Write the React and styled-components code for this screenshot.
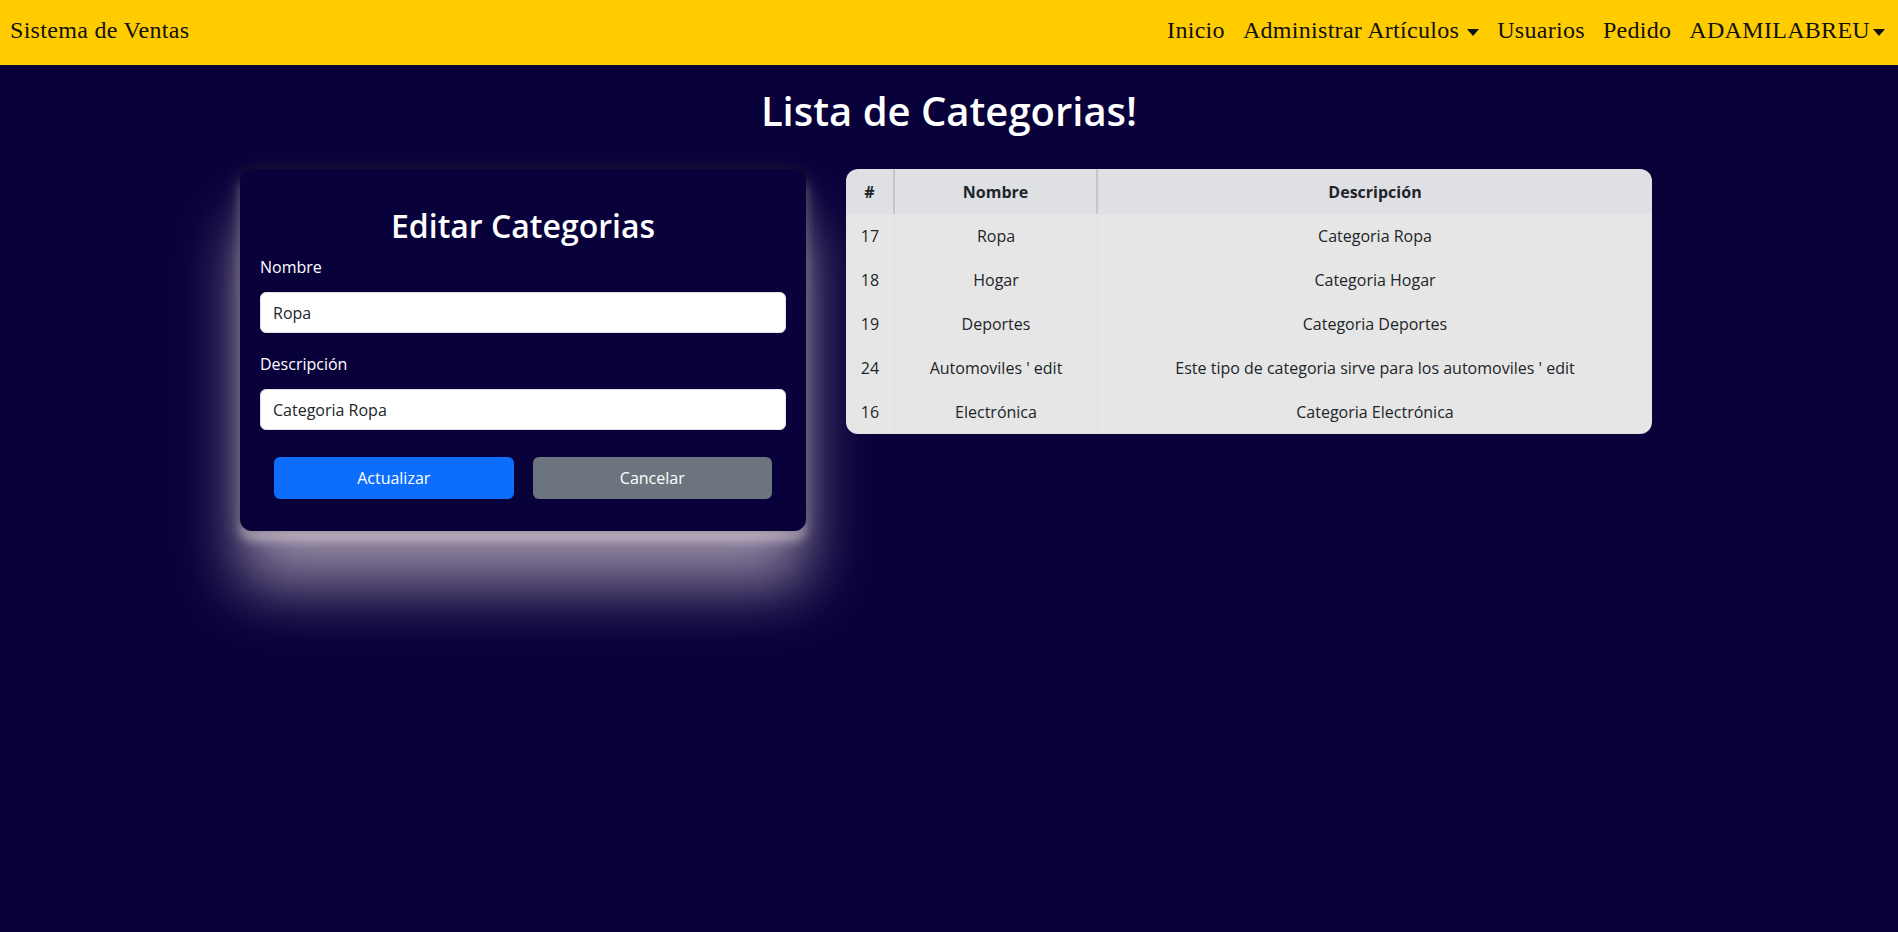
import styled, { createGlobalStyle } from "styled-components";

const GlobalStyle = createGlobalStyle`
  body {
    margin: 0;
    background: #08013a;
    font-family: "Open Sans", "Noto Sans", sans-serif;
    color: #fff;
  }
  #root { min-height: 100vh; }
  * { box-sizing: border-box; }
`

const Navbar = styled.nav`
  display: flex;
  justify-content: space-between;
  align-items: center;
  height: 65px;
  padding: 0 13px 4px 10px;
  background: #ffcc00;
  font-family: "Liberation Serif", serif;
  font-size: 24px;
  letter-spacing: 0.3px;
  color: #111;
`
const Brand = styled.a`
  color: #111;
`
const NavList = styled.ul`
  display: flex;
  gap: 18px;
  margin: 0;
  padding: 0;
  list-style: none;
`
const NavItem = styled.li`
  display: flex;
  align-items: center;
  &::after {
    content: ${(props) => props.$dropdown ? "''" : 'none'};
    margin-left: ${(props) => props.$tight ? '3px' : '8px'};
    margin-top: 3px;
    border-top: 7px solid #111;
    border-left: 6px solid transparent;
    border-right: 6px solid transparent;
  }
`
const Main = styled.main`
  display: flex;
  flex-direction: column;
  align-items: center;
  min-height: calc(100vh - 65px);
`
const PageTitle = styled.h1`
  margin: 22px 0 34px;
  font-size: 40px;
  line-height: 48px;
  font-weight: 600;
`
const Content = styled.div`
  display: flex;
  align-items: flex-start;
  gap: 40px;
  margin-right: 6px;
`
const Card = styled.section`
  width: 566px;
  padding: 38px 20px 32px;
  border-radius: 12px;
  background: #08013a;
  box-shadow:
    0 -2px 8px rgba(0, 0, 0, 0.45),
    0 6px 22px rgba(255, 255, 255, 0.22),
    0 10px 10px rgba(225, 210, 215, 0.45),
    0 55px 62px 0 rgba(236, 222, 228, 0.6);
`
const CardTitle = styled.h2`
  margin: 0 0 10px;
  text-align: center;
  font-size: 32px;
  line-height: 38px;
  font-weight: 600;
`
const Label = styled.label`
  display: block;
  margin-bottom: 13px;
  font-size: 16px;
  line-height: 24px;
`
const Input = styled.input`
  display: block;
  width: 100%;
  height: 41px;
  margin-bottom: ${(props) => props.$last ? '27px' : '19px'};
  padding: 6px 12px;
  border: 1px solid #dee2e6;
  border-radius: 6px;
  background: #fff;
  font-family: inherit;
  font-size: 16px;
  color: #212529;
`
const ButtonRow = styled.div`
  display: grid;
  grid-template-columns: 1fr 1fr;
  gap: 19px;
  padding: 0 14px;
`
const Button = styled.button`
  height: 42px;
  border: none;
  border-radius: 6px;
  background: ${(props) => props.$secondary ? '#6c757d' : '#0d6efd'};
  color: #fff;
  font-family: inherit;
  font-size: 16px;
`
const Table = styled.table`
  width: 806px;
  border-collapse: separate;
  border-spacing: 0;
  border-radius: 12px;
  overflow: hidden;
  color: #212529;
  font-size: 16px;
  text-align: center;
`
const Th = styled.th`
  height: 45px;
  width: ${(props) => props.$w};
  background: #dfe0e3;
  font-weight: 700;
  border-right: 2px solid #c6c6ca;
  &:last-child { border-right: none; }
`
const Td = styled.td`
  height: 44px;
  background: #e6e6e6;
  border-right: 1px solid #dde1e8;
  &:last-child { border-right: none; }
`

const categorias = [
  { id: 17, nombre: 'Ropa', descripcion: 'Categoria Ropa' },
  { id: 18, nombre: 'Hogar', descripcion: 'Categoria Hogar' },
  { id: 19, nombre: 'Deportes', descripcion: 'Categoria Deportes' },
  { id: 24, nombre: "Automoviles ' edit", descripcion: "Este tipo de categoria sirve para los automoviles ' edit" },
  { id: 16, nombre: 'Electrónica', descripcion: 'Categoria Electrónica' },
]

export default function App() {
  return (
    <>
      <GlobalStyle />
      <Navbar>
        <Brand>Sistema de Ventas</Brand>
        <NavList>
          <NavItem>Inicio</NavItem>
          <NavItem $dropdown>Administrar Artículos</NavItem>
          <NavItem>Usuarios</NavItem>
          <NavItem>Pedido</NavItem>
          <NavItem $dropdown $tight>ADAMILABREU</NavItem>
        </NavList>
      </Navbar>
      <Main>
        <PageTitle>Lista de Categorias!</PageTitle>
        <Content>
          <Card>
            <CardTitle>Editar Categorias</CardTitle>
            <Label>Nombre</Label>
            <Input defaultValue="Ropa" />
            <Label>Descripción</Label>
            <Input $last defaultValue="Categoria Ropa" />
            <ButtonRow>
              <Button>Actualizar</Button>
              <Button $secondary>Cancelar</Button>
            </ButtonRow>
          </Card>
          <Table>
            <thead>
              <tr>
                <Th $w="49px">#</Th>
                <Th $w="203px">Nombre</Th>
                <Th>Descripción</Th>
              </tr>
            </thead>
            <tbody>
              {categorias.map((c) => (
                <tr key={c.id}>
                  <Td>{c.id}</Td>
                  <Td>{c.nombre}</Td>
                  <Td>{c.descripcion}</Td>
                </tr>
              ))}
            </tbody>
          </Table>
        </Content>
      </Main>
    </>
  )
}
